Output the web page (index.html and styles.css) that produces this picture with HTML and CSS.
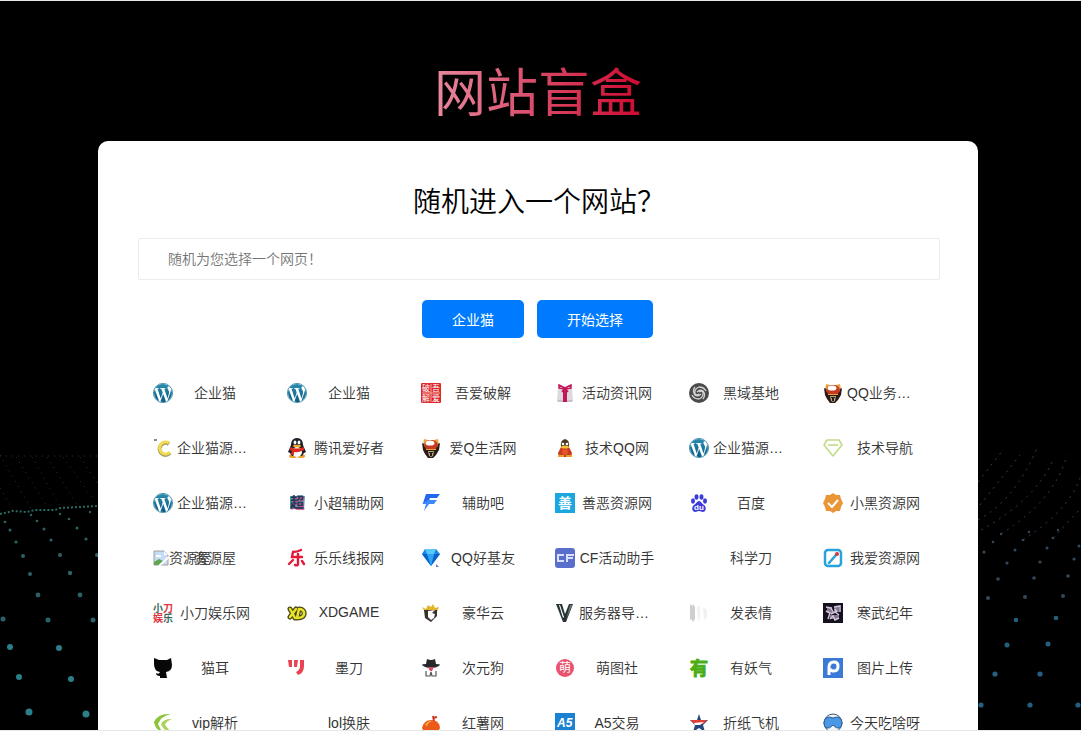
FILE: index.html
```
<!DOCTYPE html>
<html lang="zh-CN">
  <head>
    <meta charset="UTF-8" />
    <meta name="viewport" content="width=device-width, initial-scale=1.0" />
    <title>网站盲盒</title>
    <link rel="stylesheet" href="styles.css">
  </head>
  <body>
    <!-- shared icons -->
    <svg class="sprite" aria-hidden="true">
      <defs>
        <linearGradient id="wpBlue" x1="0" y1="0" x2="0" y2="1">
          <stop offset="0" stop-color="#2a8db0" />
          <stop offset="1" stop-color="#0b5c86" />
        </linearGradient>
      </defs>
      <symbol id="wordpress" viewBox="0 0 24 24">
        <circle cx="12" cy="12" r="11.500" fill="#fff" stroke="#2b7f9f" />
        <path fill="url(#wpBlue)" d="M21.469 6.825c.84 1.537 1.318 3.3 1.318 5.175 0 3.979-2.156 7.456-5.363 9.325l3.295-9.527c.615-1.54.82-2.771.82-3.864 0-.405-.026-.78-.07-1.11m-7.981.105c.647-.03 1.232-.105 1.232-.105.582-.075.514-.93-.067-.899 0 0-1.755.135-2.88.135-1.064 0-2.85-.15-2.85-.15-.585-.03-.661.855-.075.885 0 0 .54.061 1.125.09l1.68 4.605-2.37 7.08L5.354 6.9c.649-.03 1.234-.1 1.234-.1.585-.075.516-.93-.065-.896 0 0-1.746.138-2.874.138-.2 0-.438-.008-.69-.015C4.911 3.15 8.235 1.215 12 1.215c2.809 0 5.365 1.072 7.286 2.833-.046-.003-.091-.009-.141-.009-1.06 0-1.812.923-1.812 1.914 0 .89.513 1.643 1.06 2.531.411.72.89 1.643.89 2.977 0 .915-.354 1.994-.821 3.479l-1.075 3.585-3.9-11.61.001.014zM12 22.784c-1.059 0-2.081-.153-3.048-.437l3.237-9.406 3.315 9.087c.024.053.05.101.078.149-1.12.393-2.325.609-3.582.609M1.211 12c0-1.564.336-3.05.935-4.39L7.29 21.709C3.694 19.96 1.212 16.271 1.211 12" />
      </symbol>
      <symbol id="helmet" viewBox="0 0 20 20">
        <path fill="#e8a33c" d="M3 1l4 1h6l4-1 1 6H2z" />
        <path fill="#2a1b17" d="M1 5l2 1 1 3h12l1-3 2-1-1 7-3 5-3 3H7l-3-4-2-4z" />
        <path fill="#c63a22" d="M3 7Q4 2 10 2t7 5l-2 4H5z" />
        <ellipse cx="9" cy="5" rx="4.500" ry="2.600" fill="#fff" />
        <path fill="#b9a98c" d="M7 13h6l-1 5-2 1-2-1z" />
        <path fill="#2a1b17" d="M8 14h4v1H8zM9 15h2v3H9z" />
        <path fill="#e8a33c" d="M5 11h10v1H5z" />
      </symbol>
    </svg>

    <main class="page">
      <svg class="dots dots-left" viewBox="0 440 98 290" aria-hidden="true">
        <g class="far">
          <path d="M0 456H98M0 455L32 510M16 457L46 505M32 457L60 506M47 457L78 506M63 457L94 500M80 457L98 484M0 488L14 512" />
        </g>
        <path class="wave" d="M0 514L13 511L27 512L35 510L55 510L60 508L98 506" />
        <g class="near">
          <circle cx="29" cy="712" r="3.500" /><circle cx="86" cy="714" r="3.500" />
          <circle cx="19" cy="677" r="3" /><circle cx="71" cy="679" r="3" />
          <circle cx="10" cy="647" r="3" /><circle cx="59" cy="648" r="3" />
        </g>
        <g class="mid">
          <circle cx="3" cy="619" r="2.500" /><circle cx="48" cy="620" r="2.500" /><circle cx="93" cy="620" r="2.500" />
          <circle cx="38" cy="595" r="2.400" /><circle cx="80" cy="595" r="2.400" />
          <circle cx="30" cy="574" r="2" /><circle cx="70" cy="573" r="2.200" />
          <circle cx="23" cy="556" r="2" /><circle cx="60" cy="555" r="2" /><circle cx="97" cy="555" r="2" />
          <circle cx="16" cy="542" r="1.600" /><circle cx="51" cy="540" r="1.600" /><circle cx="86" cy="539" r="1.600" />
          <circle cx="10" cy="530" r="1.500" /><circle cx="44" cy="529" r="1.500" /><circle cx="77" cy="528" r="1.500" />
          <circle cx="5" cy="522" r="1.300" /><circle cx="37" cy="521" r="1.300" /><circle cx="69" cy="519" r="1.300" />
          <circle cx="31" cy="515" r="1.200" /><circle cx="60" cy="514" r="1.200" /><circle cx="90" cy="512" r="1.200" />
        </g>
      </svg>
      <svg class="dots dots-right" viewBox="978 430 103 300" aria-hidden="true">
        <g class="far">
          <path d="M978 520Q1015 500 1037 448M981 530Q1035 500 1053 460M1001 534Q1055 500 1067 455M1023 540Q1070 510 1081 475M1053 538L1081 508M978 482L1003 450M980 505L1020 455" />
        </g>
        <g class="near blue">
          <circle cx="981" cy="705" r="2.600" /><circle cx="1030" cy="705" r="2.600" /><circle cx="1078" cy="705" r="2.600" />
          <circle cx="995" cy="674" r="2.600" /><circle cx="1040" cy="674" r="2.600" />
          <circle cx="1007" cy="645" r="2.500" /><circle cx="1048" cy="644" r="2.500" />
          <circle cx="1016" cy="620" r="2.300" /><circle cx="1056" cy="618" r="2.300" />
        </g>
        <g class="mid blue">
          <circle cx="988" cy="598" r="2" /><circle cx="1025" cy="597" r="2" /><circle cx="1063" cy="596" r="2" />
          <circle cx="998" cy="579" r="1.800" /><circle cx="1034" cy="578" r="1.800" /><circle cx="1068" cy="576" r="1.800" />
          <circle cx="1007" cy="563" r="1.600" /><circle cx="1040" cy="562" r="1.600" /><circle cx="1074" cy="559" r="1.600" />
          <circle cx="984" cy="552" r="1.600" /><circle cx="1015" cy="550" r="1.500" /><circle cx="1047" cy="548" r="1.500" /><circle cx="1079" cy="546" r="1.500" />
          <circle cx="993" cy="542" r="1.300" /><circle cx="1023" cy="540" r="1.300" /><circle cx="1053" cy="538" r="1.300" />
          <circle cx="1001" cy="534" r="1.200" /><circle cx="1029" cy="532" r="1.200" /><circle cx="1058" cy="530" r="1.200" />
        </g>
      </svg>

      <h1 class="title"><span>网站盲盒</span></h1>

      <div class="container">
        <h2>随机进入一个网站？</h2>
        <input type="text" class="url" placeholder="随机为您选择一个网页！" aria-label="随机为您选择一个网页！" />
        <div class="buttons">
          <button type="button">企业猫</button>
          <button type="button">开始选择</button>
        </div>

        <div class="sites">
          <a href="#" class="site"><svg class="icon"><use href="#wordpress" /></svg><span class="name">企业猫</span></a>
          <a href="#" class="site"><svg class="icon"><use href="#wordpress" /></svg><span class="name">企业猫</span></a>
          <a href="#" class="site">
            <svg class="icon" viewBox="0 0 20 20"><rect width="20" height="20" rx="1" fill="#dc2a2c" /><path stroke="#f4a9a4" d="M10 1v18M1 10h18" /><g class="glyph thin" font-size="8" fill="#fff"><text x="1" y="8">破</text><text x="11" y="8">吾</text><text x="1" y="18">解</text><text x="11" y="18">爱</text></g></svg>
            <span class="name">吾爱破解</span>
          </a>
          <a href="#" class="site">
            <svg class="icon" viewBox="0 0 20 20"><path fill="#dcdadd" d="M3 6l14-1 1 13H2z" /><path fill="#c5c3c7" d="M2 17h16l-1 2H3z" /><path fill="#c2185b" d="M8 6h4v13H8z" /><path fill="none" stroke="#c2185b" stroke-width="1.500" d="M10 5L4 2v3l6 1 6-1V2zM10 5l-3 4M10 5l3 4" /></svg>
            <span class="name">活动资讯网</span>
          </a>
          <a href="#" class="site">
            <svg class="icon" viewBox="0 0 20 20"><circle cx="10" cy="10" r="10" fill="#4b4b4b" /><g fill="none" stroke="#d5d5d5" stroke-width="1.300"><path d="M10 9q2-2 4 0 1 5-4 7-5 0-7-4" /><path d="M10 11q-2 2-4 0-1-5 4-7 5 0 7 4" /><path d="M8 9q3-3 6-1 3 4 0 8M12 11q-3 3-6 1-3-4 0-8" /></g></svg>
            <span class="name">黑域基地</span>
          </a>
          <a href="#" class="site"><svg class="icon"><use href="#helmet" /></svg><span class="name long">QQ业务…</span></a>

          <a href="#" class="site">
            <svg class="icon" viewBox="0 0 20 20"><path fill="none" stroke="#aaa06a" stroke-width="4" d="M16 6a6 6 0 1 0 1 9" /><path fill="none" stroke="#f3dc50" stroke-width="3" d="M16 5a6 6 0 1 0 1 9" /><path fill="#8a8a8a" d="M1 1h3v2H1z" /></svg>
            <span class="name long">企业猫源…</span>
          </a>
          <a href="#" class="site">
            <svg class="icon" viewBox="0 0 20 20"><ellipse cx="6" cy="18" rx="4" ry="2" fill="#eda02c" /><ellipse cx="14" cy="18" rx="4" ry="2" fill="#eda02c" /><path fill="#20222b" d="M10 0c4 0 6 3 6 7l3 7-2 1-2 3H5l-2-3-2-1 3-7c0-4 2-7 6-7z" /><ellipse cx="10" cy="14" rx="5" ry="5" fill="#fff" /><path fill="#dd2c1e" d="M3 9q7 3 14 0v3q-6 3-10 2v3l-3-1 1-3-2-1z" /><ellipse cx="8" cy="4.500" rx="1.400" ry="2" fill="#fff" /><ellipse cx="12" cy="4.500" rx="1.400" ry="2" fill="#fff" /><ellipse cx="10" cy="8" rx="4" ry="1.300" fill="#f4ab28" /></svg>
            <span class="name">腾讯爱好者</span>
          </a>
          <a href="#" class="site"><svg class="icon"><use href="#helmet" /></svg><span class="name">爱Q生活网</span></a>
          <a href="#" class="site">
            <svg class="icon" viewBox="0 0 20 20"><path fill="#c83b1f" d="M6 9h8l3 6-1 4H4l-1-4z" /><path fill="#4a3b20" d="M10 1q5 1 4 8H6q-1-7 4-8z" /><circle cx="8" cy="6" r="1.300" fill="#fff" /><circle cx="12" cy="6" r="1.300" fill="#fff" /><ellipse cx="10" cy="9" rx="4" ry="1.600" fill="#f3c334" /><ellipse cx="10" cy="14" rx="3" ry="3" fill="#e2552c" /><path fill="#e4a12b" d="M3 17h6v2H3zM11 17h6v2h-6z" /></svg>
            <span class="name">技术QQ网</span>
          </a>
          <a href="#" class="site"><svg class="icon"><use href="#wordpress" /></svg><span class="name long">企业猫源…</span></a>
          <a href="#" class="site">
            <svg class="icon" viewBox="0 0 20 20"><g fill="none" stroke="#c0dc86" stroke-width="1.600" stroke-linejoin="round"><path d="M4 2h12l3 5-9 11L1 7z" /><path d="M5 7h10" /></g></svg>
            <span class="name">技术导航</span>
          </a>

          <a href="#" class="site"><svg class="icon"><use href="#wordpress" /></svg><span class="name long">企业猫源…</span></a>
          <a href="#" class="site">
            <svg class="icon" viewBox="0 0 20 20"><path fill="#45a9ae" d="M3 3h15l-1 13H3z" /><g class="glyph" font-size="14"><text x="4" y="15" fill="#c64f83">超</text><text x="3" y="14" fill="#233a5c">超</text></g></svg>
            <span class="name">小超辅助网</span>
          </a>
          <a href="#" class="site">
            <svg class="icon" viewBox="0 0 20 20"><path fill="#2467f0" d="M5 1h14l-3 4H9L7 10H2z" /><path fill="#3b8bff" d="M7 7h9l-3 4H8L3 18l2-7H1z" /></svg>
            <span class="name">辅助吧</span>
          </a>
          <a href="#" class="site">
            <svg class="icon" viewBox="0 0 20 20"><rect width="20" height="20" fill="#1aa6df" /><text class="glyph" x="3" y="15" font-size="14" fill="#fff">善</text></svg>
            <span class="name">善恶资源网</span>
          </a>
          <a href="#" class="site">
            <svg class="icon" viewBox="0 0 20 20"><g fill="#3b3bdc"><ellipse cx="4" cy="8" rx="2" ry="2.700" /><ellipse cx="7.500" cy="4" rx="2" ry="2.800" /><ellipse cx="12.500" cy="4" rx="2" ry="2.800" /><ellipse cx="16" cy="8" rx="2" ry="2.700" /><path d="M10 8c2 0 3 3 5 4s3 6-1 7c-2 0-2-1-4-1s-2 1-4 1c-4-1-3-6-1-7s3-4 5-4z" /></g><text class="latin" x="5" y="17" font-size="8" fill="#fff">du</text></svg>
            <span class="name">百度</span>
          </a>
          <a href="#" class="site">
            <svg class="icon" viewBox="0 0 20 20"><path fill="#eb9636" d="M10 0l3 2 4 0 1 4 2 4-2 4-1 4-4 0-3 2-3-2-4 0-1-4-2-4 2-4 1-4 4 0z" /><path fill="none" stroke="#fff" stroke-width="2" d="M5 10l4 4 6-7" /></svg>
            <span class="name">小黑资源网</span>
          </a>

          <a href="#" class="site">
            <span class="icon broken"><svg width="16" height="16" viewBox="0 0 16 16"><path fill="#c4dcf6" stroke="#a0a0a0" d="M1 1h10l4 4v10H1z" /><path fill="#fff" d="M11 1v4h4zM3 6q0-2 3-1 3 0 2 2H3z" /><path fill="#5fa650" d="M1 15V12l5-3 4 2-4 4z" /><path stroke="#fff" stroke-width="2" d="M6 16L16 7" /></svg><span>资源屋</span></span>
            <span class="name">资源屋</span>
          </a>
          <a href="#" class="site">
            <svg class="icon" viewBox="0 0 20 20"><g fill="none" stroke="#e3193a" stroke-width="2.400" stroke-linecap="round"><path d="M14 2Q10 4 6 4L5 9h10M11 6v10q0 2-3 1M6 12l-4 4M15 13l2 3" /></g></svg>
            <span class="name">乐乐线报网</span>
          </a>
          <a href="#" class="site">
            <svg class="icon" viewBox="0 0 20 20"><path fill="#1687e8" d="M4 1h11l4 5-9 12L1 6z" /><path fill="#58c7fb" d="M4 1h11l-2 5H6z" /><path fill="#0b61ca" d="M1 6h5l4 12zM13 6h6l-9 12z" /><path fill="#2fa4f5" d="M6 6h7l-3 12z" /><path fill="#6c75c8" d="M15 16l3 3h-3z" /></svg>
            <span class="name">QQ好基友</span>
          </a>
          <a href="#" class="site">
            <svg class="icon" viewBox="0 0 20 20"><rect width="20" height="20" rx="3" fill="#5a6ecb" /><path fill="none" stroke="#d9dffc" stroke-width="2" d="M9 7H3v6h6M12 14V7h7M12 10h6" /></svg>
            <span class="name">CF活动助手</span>
          </a>
          <a href="#" class="site"><span class="icon"></span><span class="name">科学刀</span></a>
          <a href="#" class="site">
            <svg class="icon" viewBox="0 0 20 20"><rect x="2" y="2" width="16" height="16" rx="3" fill="#fff" stroke="#27a2dc" stroke-width="2.500" /><path stroke="#27a2dc" stroke-width="2.500" stroke-linecap="round" d="M6 15l7-8" /><circle cx="14" cy="6" r="2" fill="#e13232" /></svg>
            <span class="name">我爱资源网</span>
          </a>

          <a href="#" class="site">
            <svg class="icon" viewBox="0 0 20 20"><g class="glyph" font-size="10"><text x="0" y="9" fill="#3b6b60">小</text><text x="10" y="9" fill="#e2333d">刀</text><text x="0" y="19" fill="#e2333d">娱</text><text x="10" y="19" fill="#3b6b60">乐</text></g></svg>
            <span class="name">小刀娱乐网</span>
          </a>
          <a href="#" class="site">
            <svg class="icon" viewBox="0 0 20 20"><g fill="none" stroke-linejoin="round" stroke-linecap="round"><path stroke="#4a4713" stroke-width="5" d="M3 6l5 9M9 6l-6 8M12 6l-2 9q8 0 7-6-1-3-5-3" /><path stroke="#e9e32c" stroke-width="2.500" d="M3 6l5 9M9 6l-6 8M12 6l-2 9q8 0 7-6-1-3-5-3" /></g></svg>
            <span class="name">XDGAME</span>
          </a>
          <a href="#" class="site">
            <svg class="icon" viewBox="0 0 20 20"><path fill="#e0b52b" d="M1 4l4 2 2-4 3 2 2-3 2 4 4-1-2 5H4z" /><path fill="#38302d" d="M3 7h13v6l-6 6-6-4z" /><path fill="#fff" d="M7 8l7-1-3 3 3 1-1 4-3 2-3-3z" /><path fill="#38302d" d="M12 9l3-1v3z" /></svg>
            <span class="name">豪华云</span>
          </a>
          <a href="#" class="site">
            <svg class="icon" viewBox="0 0 20 20"><path fill="#273436" d="M1 1h6l3 10 4-10h4l-7 18H8z" /><path fill="#fff" d="M4 2h1l4 12-1 1z" /><path fill="#6b787a" d="M15 2h2l-6 15z" /></svg>
            <span class="name long">服务器导…</span>
          </a>
          <a href="#" class="site">
            <svg class="icon" viewBox="0 0 20 20"><path fill="#cfcfcf" d="M1 1l2 2 1-2 2 3v12l-2 3-2-3-1 1z" /><path fill="#f1f1f1" d="M8 4l3-1v13l-2 2zM14 4l4 3v7l-3 3z" /></svg>
            <span class="name">发表情</span>
          </a>
          <a href="#" class="site">
            <svg class="icon" viewBox="0 0 20 20"><rect width="20" height="20" fill="#15101f" /><path fill="#82748f" d="M4 4h5v6H4zM11 4h5v5h-5zM7 12h9v4H7z" /><path fill="none" stroke="#d3c5d8" stroke-width="1.500" d="M3 4l5 1 2 4M11 4l6-1v6M3 8l4 2-2 6M8 11l4-2 4 3M7 16l3-3 2 4 4-2M12 6l2 3" /></svg>
            <span class="name">寒武纪年</span>
          </a>

          <a href="#" class="site">
            <svg class="icon" viewBox="0 0 20 20"><path fill="#080808" d="M1 0l5 2h8l4-2 1 7q0 6-6 7l1 6H7v-2q-4 0-4-3 3 2 4-1-6-1-6-8z" /></svg>
            <span class="name">猫耳</span>
          </a>
          <a href="#" class="site">
            <svg class="icon" viewBox="0 0 20 20"><g fill="#e94454"><path d="M1 2h4v7H2zM7 2h4l-1 7H7zM13 2h4v6q0 7-6 9l-2-3q4-2 4-6z" /></g></svg>
            <span class="name">墨刀</span>
          </a>
          <a href="#" class="site">
            <svg class="icon" viewBox="0 0 20 20"><path fill="#26292b" d="M6 1q4 2 8 0l1 5q4 0 4 1-3 3-9 3T1 7q0-1 4-1z" /><path fill="#d64c68" d="M7 9h6l-2 4H9z" /><path fill="none" stroke="#555" stroke-width="1.200" d="M5 13v5h4l1-4 1 4h4v-5" /></svg>
            <span class="name">次元狗</span>
          </a>
          <a href="#" class="site">
            <svg class="icon" viewBox="0 0 20 20"><circle cx="10" cy="10" r="9" fill="#ea5270" /><text class="glyph thin" x="4" y="14" font-size="12" fill="#fff">萌</text></svg>
            <span class="name">萌图社</span>
          </a>
          <a href="#" class="site">
            <svg class="icon" viewBox="0 0 20 20"><text class="glyph" x="1" y="17" font-size="18" fill="#4bad16" stroke="#4bad16">有</text></svg>
            <span class="name">有妖气</span>
          </a>
          <a href="#" class="site">
            <svg class="icon" viewBox="0 0 20 20"><rect width="20" height="20" fill="#3b79d8" /><path fill="none" stroke="#fff" stroke-width="3" d="M6 17V9q0-5 5-5 4 0 4 4 0 5-4 5-3 0-4-2" /></svg>
            <span class="name">图片上传</span>
          </a>

          <a href="#" class="site">
            <svg class="icon" viewBox="0 0 20 20"><path fill="#8cc43a" d="M1 9Q5 0 18 1 8 3 5 11l4 8Q2 16 1 9z" /><path fill="#a9d457" d="M8 11q2-5 11-5-6 2-7 6l6 7q-8-1-10-8z" /></svg>
            <span class="name">vip解析</span>
          </a>
          <a href="#" class="site"><span class="icon"></span><span class="name">lol换肤</span></a>
          <a href="#" class="site">
            <svg class="icon" viewBox="0 0 20 20"><path fill="#eb5a18" d="M1 15Q3 6 12 7q7 2 7 8l-2 4H3z" /><path fill="#f9a84a" d="M4 12q3-5 9-4-5 0-7 5z" /><path fill="none" stroke="#d6352b" stroke-width="2" d="M13 8l-1-5M12 5l4-1" /></svg>
            <span class="name">红薯网</span>
          </a>
          <a href="#" class="site">
            <svg class="icon" viewBox="0 0 20 20"><rect width="20" height="20" fill="#1b82d2" /><text class="latin" x="2" y="14" font-size="12" font-style="italic" fill="#fff">A5</text></svg>
            <span class="name">A5交易</span>
          </a>
          <a href="#" class="site">
            <svg class="icon" viewBox="0 0 20 20"><path fill="#26477d" d="M10 1l2 6h7l-5 5 2 7-6-4-6 4 2-7-5-5h7z" /><path fill="#e33e38" d="M1 7h17l-4 4H6z" /><path fill="#fff" d="M5 10l10-1-4 3H6z" /></svg>
            <span class="name">折纸飞机</span>
          </a>
          <a href="#" class="site">
            <svg class="icon" viewBox="0 0 20 20"><circle cx="10" cy="10" r="9" fill="#f3f5f7" stroke="#365777" /><path fill="#4b98e6" stroke="#2d5f94" d="M3 5q3-2 7 0 4-2 7 0 4 5 0 10-4 1-7-3-3 4-7 3-4-5 0-10z" /></svg>
            <span class="name">今天吃啥呀</span>
          </a>
        </div>
      </div>
    </main>
  </body>
</html>
```

FILE: styles.css
```
* {
  box-sizing: border-box;
}
body {
  margin: 0;
  background: #fff;
  font-family: "Liberation Sans", "Noto Sans CJK SC", sans-serif;
  font-weight: 350;
  font-size: 14px;
  color: #333;
}
.sprite {
  position: absolute;
  width: 0;
  height: 0;
}
.page {
  position: relative;
  height: calc(100vh - 2px);
  padding: 63px 5px 0 0;
  overflow: hidden;
  background: #000;
  border-top: 1px solid #e8e8e8;
  border-bottom: 1px solid #e8e8e8;
}

/* Dotted wave behind the card */
.dots {
  position: absolute;
  bottom: 0;
}
.dots-left {
  left: 0;
  width: 98px;
}
.dots-right {
  right: 0;
  width: 103px;
}
.far path {
  fill: none;
  stroke: #2c3434;
  stroke-width: 1;
  stroke-dasharray: 1 5;
}
.dots-right .far path {
  stroke: #3a4148;
  stroke-dasharray: 2 5;
}
.wave {
  fill: none;
  stroke: #2a6a60;
  stroke-width: 2;
  stroke-dasharray: 2 2;
}
.near {
  fill: #2b7f88;
}
.mid {
  fill: #2c6166;
}
.near.blue {
  fill: #245f80;
}
.mid.blue {
  fill: #34485c;
}

.title {
  position: relative;
  margin: 0 0 17px;
  text-align: center;
  font-size: 52px;
  line-height: 60px;
  font-weight: 400;
}
.title span {
  background: linear-gradient(to right, #e8899f, #cc0a2f);
  -webkit-background-clip: text;
  background-clip: text;
  color: transparent;
}
.container {
  position: relative;
  max-width: 880px;
  margin: 0 auto;
  padding: 41px 38px 40px 40px;
  background: #fff;
  border-radius: 10px;
}
h2 {
  margin: 0 0 14px;
  text-align: center;
  font-size: 28px;
  line-height: 42px;
  font-weight: 350;
  color: #000;
}
.url {
  display: block;
  width: 100%;
  height: 42px;
  padding: 0 29px;
  border: 1px solid #ececec;
  border-radius: 2px;
  font: inherit;
}
.url::placeholder {
  color: #757575;
}
.buttons {
  display: flex;
  justify-content: center;
  gap: 13px;
  margin: 20px 0 27px;
  padding-right: 3px;
}
button {
  height: 38px;
  padding: 0 30px;
  background-color: #007bff;
  color: #fff;
  border: none;
  border-radius: 5px;
  font: inherit;
  font-weight: 400;
  cursor: pointer;
}
button:hover {
  background-color: #0069d9;
}

.sites {
  display: grid;
  grid-template-columns: repeat(6, 1fr);
  margin-right: -2px;
}
.site {
  display: flex;
  align-items: center;
  gap: 4px;
  height: 55px;
  padding-left: 15px;
  color: #333;
  text-decoration: none;
}
.icon {
  flex: none;
  width: 20px;
  height: 20px;
  overflow: visible;
}
.name {
  width: 76px;
  padding-bottom: 2px;
  text-align: center;
  white-space: nowrap;
}
.name.long {
  text-align: left;
}
.broken {
  display: flex;
  align-items: center;
  white-space: nowrap;
}
.broken svg {
  flex: none;
}
.broken span {
  padding-bottom: 2px;
}
.glyph {
  font-family: "Noto Sans CJK SC", sans-serif;
  font-weight: 700;
}
.glyph.thin {
  font-weight: 400;
}
.latin {
  font-family: "Liberation Sans", sans-serif;
  font-weight: 700;
}

@media (max-width: 768px) {
  .sites {
    grid-template-columns: repeat(3, 1fr);
  }
}
```
